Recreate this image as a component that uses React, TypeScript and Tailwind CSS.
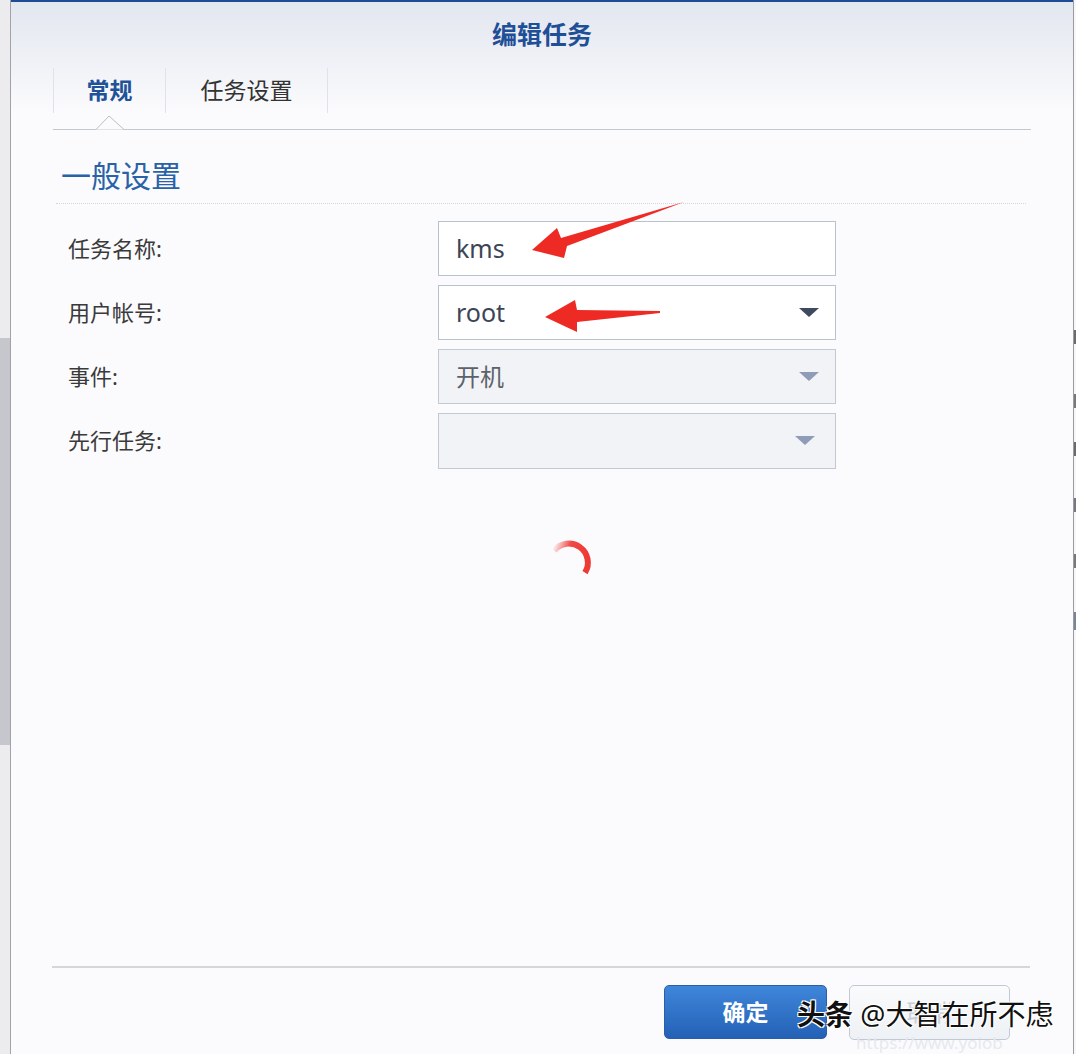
import React from "react";

function Tri({ dark }: { dark?: boolean }) {
  return (
    <svg width="20" height="9" viewBox="0 0 20 9" className="shrink-0">
      <polygon points="0,0 20,0 10,9" fill={dark ? "#3e4a5f" : "#8e9cb8"} />
    </svg>
  );
}

function Row({ label, children }: { label: string; children: React.ReactNode }) {
  return (
    <div className="flex h-[55px] items-center">
      <div className="w-[385px] pl-[15px] text-[22px] text-[#3a3a3a]">{label}</div>
      {children}
    </div>
  );
}

export default function App() {
  return (
    <div className="relative flex h-[1054px] w-[1076px] overflow-hidden bg-[#f3f3f5] font-['Noto_Sans','Noto_Sans_CJK_SC',sans-serif]">
      {/* left background strip */}
      <div className="flex w-[10px] flex-col bg-[#ececef]">
        <div className="h-[338px]" />
        <div className="h-[407px] bg-[#c6c7cd]" />
      </div>
      <div className="w-px bg-[#a2a2a7]" />

      {/* dialog */}
      <div className="flex w-[1062px] flex-col border-t-2 border-[#1e4b93] bg-[linear-gradient(to_bottom,#e2e6ef_0px,#fbfbfd_110px)]">
        <div className="flex h-[66px] items-center justify-center text-[25px] font-bold text-[#1f4f96]">编辑任务</div>

        {/* tabs */}
        <div className="relative mx-[42px] h-[62px] border-b border-[#c3c8cf]">
          <div className="flex h-[45px]">
            <div className="flex w-[113px] items-center justify-center border-x border-[#dde3ea] text-[23px] font-bold text-[#1f5299]">常规</div>
            <div className="flex w-[162px] items-center justify-center border-r border-[#dde3ea] text-[23px] text-[#333]">任务设置</div>
          </div>
          <svg width="28" height="15" viewBox="0 0 28 15" className="absolute bottom-[-1px] left-[43px]">
            <polygon points="0,14.5 13,1 28,14.5" fill="#fbfbfd" />
            <polyline points="0,14.5 13,1 28,14.5" fill="none" stroke="#b9bec6" strokeWidth="1" />
          </svg>
        </div>

        {/* body */}
        <div className="mx-[42px] flex flex-1 flex-col">
          <div className="mt-[28px] pl-[8px] text-[30px] leading-[36px] text-[#2a62a8]">一般设置</div>
          <div className="ml-[3px] mr-[5px] mt-[9px] border-t border-dotted border-[#d3d8df]" />

          <div className="mt-[17px] flex flex-col gap-[9px]">
            <Row label="任务名称:">
              <div className="flex h-[55px] w-[398px] items-center border border-[#b8c2ce] bg-white pl-[17px] text-[25px] text-[#3c4555]">kms</div>
            </Row>
            <Row label="用户帐号:">
              <div className="flex h-[55px] w-[398px] items-center justify-between border border-[#b8c2ce] bg-white pl-[17px] pr-[16px] text-[25px] text-[#3c4555]">
                <span>root</span>
                <Tri dark />
              </div>
            </Row>
            <Row label="事件:">
              <div className="flex h-[55px] w-[398px] items-center justify-between border border-[#c2c9d3] bg-[#f1f3f6] pl-[17px] pr-[16px] text-[24px] text-[#5c626b]">
                <span>开机</span>
                <Tri />
              </div>
            </Row>
            <Row label="先行任务:">
              <div className="flex h-[56px] w-[398px] items-center justify-end border border-[#c2c9d3] bg-[#f1f3f6] pr-[20px]">
                <Tri />
              </div>
            </Row>
          </div>

          <div className="ml-[493px] mt-[69px]">
            <svg width="48" height="48" viewBox="-24 -24 48 48">
              <defs>
                <linearGradient id="sp" x1="0" y1="0" x2="1" y2="0.3">
                  <stop offset="0" stopColor="#f04a45" stopOpacity="0" />
                  <stop offset="0.45" stopColor="#f04a45" stopOpacity="1" />
                  <stop offset="1" stopColor="#ee3a35" stopOpacity="1" />
                </linearGradient>
              </defs>
              <path d="M -15.9 -10.3 A 19 19 0 0 1 15 11.7" fill="none" stroke="url(#sp)" strokeWidth="6" />
            </svg>
          </div>
        </div>

        {/* footer */}
        <div className="ml-[41px] mr-[43px] flex h-[88px] justify-end gap-[22px] border-t-2 border-[#d6d6da] pr-[20px] pt-[17px]">
          <div className="flex h-[54px] w-[163px] items-center justify-center rounded-[5px] border border-[#2a5ea8] bg-[linear-gradient(to_bottom,#3f86da,#2361b6)] text-[23px] font-bold text-white">确定</div>
          <div className="flex h-[55px] w-[161px] items-center justify-center rounded-[5px] border border-[#c3c9d3] bg-[linear-gradient(to_bottom,#fafbfc,#eef1f5)] text-[23px] text-[#c9ced6]">取消</div>
        </div>
      </div>

      <div className="w-px bg-[#9c9ca0]" />
      <div className="flex w-[2px] flex-col bg-[#f7f7f9]">
        <div className="mt-[330px] h-[14px] bg-[#6a6a75]" />
        <div className="mt-[50px] h-[14px] bg-[#777782]" />
        <div className="mt-[34px] h-[14px] bg-[#6a6a75]" />
        <div className="mt-[42px] h-[14px] bg-[#777782]" />
        <div className="mt-[42px] h-[14px] bg-[#777782]" />
        <div className="mt-[44px] h-[18px] bg-[#7a8498]" />
      </div>

      {/* red arrows */}
      <svg className="pointer-events-none absolute left-0 top-0" width="1076" height="1054">
        <polygon points="532,250 557,228 561,238 684,202 567,246 564,258" fill="#ee2a24" />
        <polygon points="545,317 575,300 577,310 660,311 660,313 577,322 577,332" fill="#ee2a24" />
      </svg>

      {/* watermark */}
      <div className="pointer-events-none absolute left-[797px] top-[996px] whitespace-nowrap text-[28px] leading-[36px] text-[#111] [text-shadow:1px_1px_0_#fff,-1px_-1px_0_#fff,1px_-1px_0_#fff,-1px_1px_0_#fff]">
        <span className="font-bold">头条</span> @大智在所不虑
      </div>
      <div className="pointer-events-none absolute left-[856px] top-[1030px] text-[17px] text-[#e6e9ef]">https://www.yoiob</div>
    </div>
  );
}
